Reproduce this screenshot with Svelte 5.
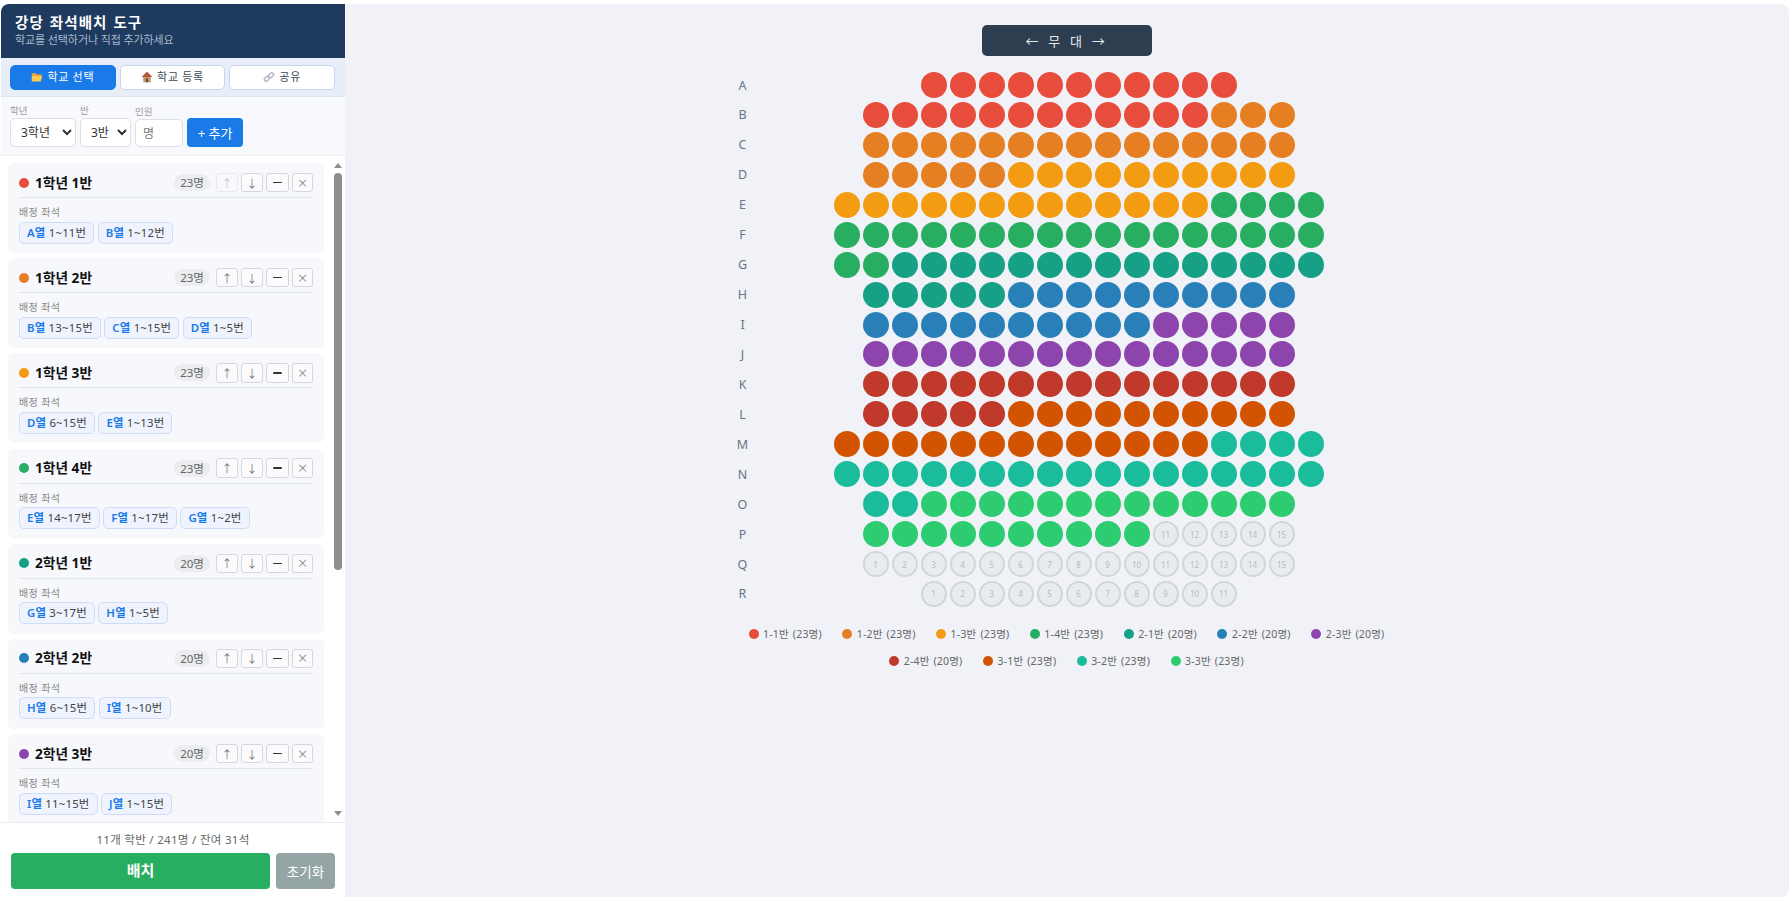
<script>
  const colors = ['#e74c3c','#e67e22','#f39c12','#27ae60','#16a085','#2980b9','#8e44ad','#c0392b','#d35400','#1abc9c','#2ecc71'];
  const classes = [
    { g: 1, c: 1, n: 23, seats: [['A','1~11'],['B','1~12']] },
    { g: 1, c: 2, n: 23, seats: [['B','13~15'],['C','1~15'],['D','1~5']] },
    { g: 1, c: 3, n: 23, seats: [['D','6~15'],['E','1~13']] },
    { g: 1, c: 4, n: 23, seats: [['E','14~17'],['F','1~17'],['G','1~2']] },
    { g: 2, c: 1, n: 20, seats: [['G','3~17'],['H','1~5']] },
    { g: 2, c: 2, n: 20, seats: [['H','6~15'],['I','1~10']] },
    { g: 2, c: 3, n: 20, seats: [['I','11~15'],['J','1~15']] }
  ];
  const legend = [['1-1',23],['1-2',23],['1-3',23],['1-4',23],['2-1',20],['2-2',20],['2-3',20],['2-4',20],['3-1',23],['3-2',23],['3-3',23]];
  const counts = legend.map((l) => l[1]);
  const layout = [['A',11],['B',15],['C',15],['D',15],['E',17],['F',17],['G',17],['H',15],['I',15],['J',15],['K',15],['L',15],['M',17],['N',17],['O',15],['P',15],['Q',15],['R',11]];
  let ci = 0, used = 0;
  const rows = layout.map(([label, len]) => {
    const seats = [];
    for (let i = 1; i <= len; i++) {
      while (ci < counts.length && used >= counts[ci]) { ci++; used = 0; }
      if (ci < counts.length) { seats.push({ n: i, color: colors[ci] }); used++; }
      else seats.push({ n: i, color: null });
    }
    return { label, seats };
  });
</script>

<div class="app">
  <aside class="side">
    <header class="head">
      <h1>강당 좌석배치 도구</h1>
      <p>학교를 선택하거나 직접 추가하세요</p>
    </header>
    <div class="tabs">
      <button class="tab on">
        <svg viewBox="0 0 16 16" width="12" height="12"><path d="M1 3h5.500l1.500 1.500H14v2.500H1z" fill="#e8a93a"/><path d="M1 14V6.500h14L13 14z" fill="#fcc94f"/></svg>
        학교 선택
      </button>
      <button class="tab">
        <svg viewBox="0 0 16 16" width="12" height="12"><path d="M8 1 1 8h2v7h10V8h2z" fill="#c39a72"/><path d="M8 1 1 8h14z" fill="#b5563f"/><rect x="6.500" y="10" width="3" height="5" fill="#6d4a33"/></svg>
        학교 등록
      </button>
      <button class="tab">
        <svg viewBox="0 0 16 16" width="12" height="12" fill="none" stroke="#b9b3cf" stroke-width="2"><rect x="1.500" y="8" width="7.500" height="4.500" rx="2.200" transform="rotate(-45 5.200 10.200)"/><rect x="7" y="3.500" width="7.500" height="4.500" rx="2.200" transform="rotate(-45 10.800 5.800)"/></svg>
        공유
      </button>
    </div>
    <div class="form">
      <label class="field"><span>학년</span>
        <select class="sel w1"><option>3학년</option></select>
      </label>
      <label class="field"><span>반</span>
        <select class="sel w2"><option>3반</option></select>
      </label>
      <label class="field"><span>인원</span>
        <input class="num" placeholder="명" />
      </label>
      <button class="add">+ 추가</button>
    </div>
    <div class="list">
      <div class="scroller">
        {#each classes as k, i}
          <article class="card">
            <div class="top">
              <i class="dot" style="background:{colors[i]}"></i>
              <strong>{k.g}학년 {k.c}반</strong>
              <span class="count">{k.n}명</span>
              <div class="acts">
                <button class="act" class:dim={i === 0}>↑</button>
                <button class="act">↓</button>
                <button class="act wide"><b class="dash"></b></button>
                <button class="act thin">×</button>
              </div>
            </div>
            <div class="cap">배정 좌석</div>
            <div class="chips">
              {#each k.seats as s}
                <span class="chip"><b>{s[0]}열</b> {s[1]}번</span>
              {/each}
            </div>
          </article>
        {/each}
      </div>
      <div class="bar">
        <span class="arrow up"></span>
        <span class="track"><span class="thumb"></span></span>
        <span class="arrow down"></span>
      </div>
    </div>
    <footer class="foot">
      <div class="sum">11개 학반 / 241명 / 잔여 31석</div>
      <div class="btns">
        <button class="go">배치</button>
        <button class="reset">초기화</button>
      </div>
    </footer>
  </aside>
  <main class="main">
    <div class="stage">← 무 대 →</div>
    <div class="rows">
      {#each rows as r}
        <div class="row">
          <span class="lab">{r.label}</span>
          <div class="seats">
            {#each r.seats as s}
              {#if s.color}
                <span class="seat" style="background:{s.color}"></span>
              {:else}
                <span class="seat empty">{s.n}</span>
              {/if}
            {/each}
          </div>
        </div>
      {/each}
    </div>
    <div class="legend">
      {#each legend as l, i}
        <span class="li"><i style="background:{colors[i]}"></i>{l[0]}반 ({l[1]}명)</span>
      {/each}
    </div>
  </main>
</div>

<style>
  :global(body) { margin: 0; background: #fff; font-family: "Noto Sans", "Noto Sans CJK KR", sans-serif; }
  .app { height: 902px; box-sizing: border-box; padding: 4px 3px 5px 1px; display: flex; }
  .side { width: 344px; flex: none; display: flex; flex-direction: column; background: #fff; border-radius: 8px 0 0 8px; overflow: hidden; }
  .head { height: 54px; box-sizing: border-box; background: #1e3a5f; padding: 8px 14px; color: #fff; }
  h1 { margin: 0; font-size: 14.500px; line-height: 20px; font-weight: 700; letter-spacing: 1.100px; word-spacing: 1px; }
  .head p { margin: 0; font-size: 11px; line-height: 16px; color: #a9b9cc; letter-spacing: -.1px; }
  .tabs { height: 39px; box-sizing: border-box; background: #e8eef8; padding: 7px 10px 7px 9px; display: flex; gap: 4px; border-bottom: 1px solid #dfe6f2; }
  .tab { flex: 1; height: 25px; border: 1px solid #c5d5ef; background: #fff; border-radius: 5px; font: inherit; font-size: 11px; line-height: 14px; color: #3d4a58; display: flex; align-items: center; justify-content: center; gap: 4px; padding: 0 0 1px; letter-spacing: .7px; }
  .tab.on { background: #1a7be8; border-color: #1a7be8; color: #fff; }
  .form { height: 59px; box-sizing: border-box; background: #f8f9fc; padding: 10px 9px 8px; display: flex; gap: 4px; align-items: flex-end; border-bottom: 1px solid #eef0f4; }
  .field { display: flex; flex-direction: column; }
  .field span { font-size: 9.500px; line-height: 11px; color: #999; margin-bottom: 2px; }
  .sel { height: 29px; box-sizing: border-box; border: 1px solid #dcdfe4; border-radius: 5px; background: #fff; font: inherit; font-size: 12px; color: #333; padding: 0 0 0 6px; }
  .w1 { width: 66px; }
  .w2 { width: 51px; }
  .num { width: 48px; height: 28px; box-sizing: border-box; border: 1px solid #dcdfe4; border-radius: 5px; font: inherit; font-size: 12px; padding: 0 7px; background: #fff; }
  .num::placeholder { color: #777; }
  .add { width: 56px; height: 29px; border: 0; border-radius: 4px; background: #1a7be8; color: #fff; font: inherit; font-size: 13px; padding: 0; }
  .list { flex: 1; min-height: 0; display: flex; background: #fff; }
  .scroller { flex: 1; min-width: 0; overflow: hidden; padding: 7px 8px 0 7px; display: flex; flex-direction: column; gap: 5.200px; }
  .card { flex: none; height: 90px; box-sizing: border-box; background: #f7f8fc; border-radius: 6px; padding: 9px 11px 0 11px; }
  .top { height: 26px; box-sizing: border-box; display: flex; align-items: center; border-bottom: 1px solid #e3e6ec; padding-bottom: 4px; }
  .dot { width: 10px; height: 10px; border-radius: 50%; margin-right: 6px; flex: none; }
  strong { font-size: 13.700px; line-height: 18px; font-weight: 700; color: #111; }
  .count { margin-left: auto; background: #ebedf0; color: #666; font-size: 11.500px; border-radius: 9px; height: 17px; line-height: 17px; width: 36px; text-align: center; margin-right: 6px; }
  .acts { display: flex; gap: 3px; }
  .act { width: 22px; height: 19.500px; box-sizing: border-box; border: 1px solid #d4d7dc; border-radius: 3px; background: #fbfbfd; font: inherit; font-size: 11px; color: #777; padding: 0; display: flex; align-items: center; justify-content: center; }
  .act.wide { width: 23px; }
  .act.thin { width: 21px; font-size: 17px; font-weight: 300; line-height: 16px; color: #888; }
  .act.dim { opacity: .4; }
  .dash { width: 9px; height: 1.500px; background: #333; border-radius: 1px; }
  .cap { font-size: 10px; line-height: 12px; color: #888; margin-top: 8px; letter-spacing: .4px; }
  .chips { display: flex; gap: 3.500px; margin-top: 3.500px; }
  .chip { height: 22px; box-sizing: border-box; line-height: 20px; border: 1px solid #cfdcf5; background: #eef3fd; border-radius: 5px; font-size: 11.400px; color: #444; padding: 0 7px; white-space: nowrap; letter-spacing: .2px; }
  .chip b { color: #1a7be8; font-weight: 600; }
  .bar { width: 12px; margin-right: 1px; flex: none; display: flex; flex-direction: column; align-items: center; padding: 7px 0 6px; box-sizing: border-box; }
  .arrow { width: 0; height: 0; border-left: 4px solid transparent; border-right: 4px solid transparent; flex: none; }
  .arrow.up { border-bottom: 5px solid #8f8f8f; }
  .arrow.down { border-top: 5px solid #8f8f8f; }
  .track { flex: 1; width: 8px; padding-top: 5px; }
  .thumb { display: block; width: 8px; height: 397px; background: #8f8f8f; border-radius: 4px; }
  .foot { height: 75px; box-sizing: border-box; background: #fff; border-top: 1px solid #e8eaee; padding: 9px 10px 0; }
  .sum { text-align: center; font-size: 11.500px; line-height: 16px; color: #666; letter-spacing: .3px; }
  .btns { display: flex; gap: 6px; margin-top: 5px; }
  .go { flex: 1; height: 36px; border: 0; border-radius: 4px; background: #27ae60; color: #fff; font: inherit; font-weight: 700; font-size: 15px; line-height: 20px; padding: 0 0 2px; }
  .reset { width: 59px; height: 36px; border: 0; border-radius: 4px; background: #95a5a6; color: #fff; font: inherit; font-size: 13.500px; padding: 0; }
  .main { flex: 1; min-width: 0; background: #f0f2f7; border-radius: 0 8px 8px 0; display: flex; flex-direction: column; align-items: center; padding: 21px 1px 0 0; }
  .stage { width: 170px; height: 31px; background: #2c3e50; color: #e6ebef; border-radius: 5px; display: flex; align-items: center; justify-content: center; font-size: 13px; letter-spacing: 2.700px; word-spacing: 1px; }
  .rows { width: 672px; margin-top: 16px; display: flex; flex-direction: column; gap: 3.940px; }
  .row { display: flex; align-items: center; height: 26px; }
  .lab { width: 24px; flex: none; text-align: center; font-size: 12.500px; color: #6b7480; }
  .seats { flex: 1; display: flex; justify-content: center; gap: 3px; }
  .seat { width: 26px; height: 26px; box-sizing: border-box; border-radius: 50%; flex: none; display: flex; align-items: center; justify-content: center; }
  .seat.empty { background: #e9ecef; border: 2px solid #d2d6db; font-size: 8px; color: #b4bac2; }
  .legend { width: 700px; margin-top: 19px; display: flex; flex-wrap: wrap; justify-content: center; column-gap: 20.500px; row-gap: 11px; }
  .li { display: flex; align-items: center; gap: 4.500px; font-size: 10.500px; line-height: 16px; color: #666; white-space: nowrap; letter-spacing: .2px; word-spacing: 1px; }
  .li i { width: 10px; height: 10px; border-radius: 50%; }
</style>
